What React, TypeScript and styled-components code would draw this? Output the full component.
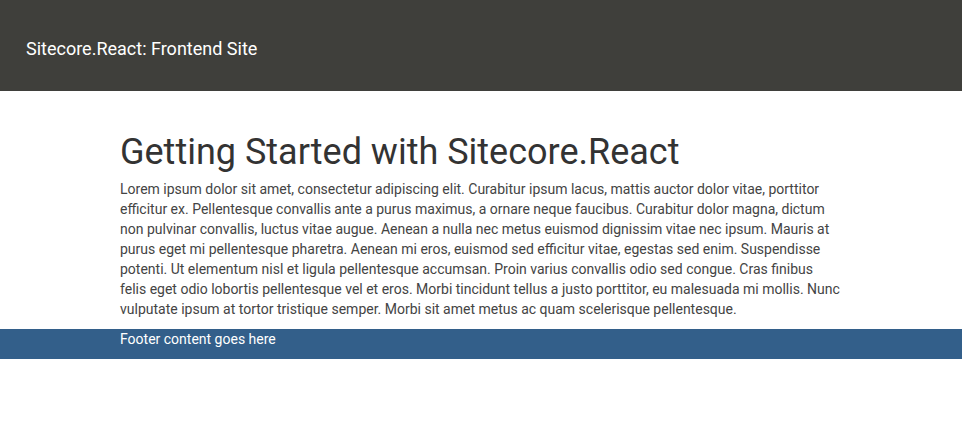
import React from "react";
import styled, { createGlobalStyle } from "styled-components";

const GlobalStyle = createGlobalStyle`
  html, body { margin: 0; padding: 0; background: #fff; }
  body { font-family: Roboto, "Liberation Sans", sans-serif; }
`;

const Header = styled.header`
  height: 91px;
  background: #3f3f3b;
  display: flex;
  align-items: center;
  padding: 7px 0 0 26px;
  box-sizing: border-box;
`;

const SiteTitle = styled.div`
  color: #fff;
  font-size: 18px;
  line-height: 20px;
`;

const Main = styled.main`
  width: 722px;
  margin: 0 auto 0 120px;
  padding: 41px 0 10px;
`;

const Heading = styled.h1`
  margin: 0 0 7px;
  font-size: 36px;
  font-weight: 400;
  line-height: 40px;
  color: #333;
`;

const Body = styled.p`
  margin: 0;
  font-size: 14px;
  line-height: 20px;
  color: #444;
`;

const Footer = styled.footer`
  background: #335f8a;
  height: 30px;
  padding-left: 120px;
  color: #fff;
  font-size: 14px;
  line-height: 20px;
`;

const text =
  "Lorem ipsum dolor sit amet, consectetur adipiscing elit. Curabitur ipsum lacus, mattis auctor dolor vitae, porttitor efficitur ex. Pellentesque convallis ante a purus maximus, a ornare neque faucibus. Curabitur dolor magna, dictum non pulvinar convallis, luctus vitae augue. Aenean a nulla nec metus euismod dignissim vitae nec ipsum. Mauris at purus eget mi pellentesque pharetra. Aenean mi eros, euismod sed efficitur vitae, egestas sed enim. Suspendisse potenti. Ut elementum nisl et ligula pellentesque accumsan. Proin varius convallis odio sed congue. Cras finibus felis eget odio lobortis pellentesque vel et eros. Morbi tincidunt tellus a justo porttitor, eu malesuada mi mollis. Nunc vulputate ipsum at tortor tristique semper. Morbi sit amet metus ac quam scelerisque pellentesque.";

export default function App() {
  return (
    <>
      <GlobalStyle />
      <Header>
        <SiteTitle>Sitecore.React: Frontend Site</SiteTitle>
      </Header>
      <Main>
        <Heading>Getting Started with Sitecore.React</Heading>
        <Body>{text}</Body>
      </Main>
      <Footer>Footer content goes here</Footer>
    </>
  );
}
